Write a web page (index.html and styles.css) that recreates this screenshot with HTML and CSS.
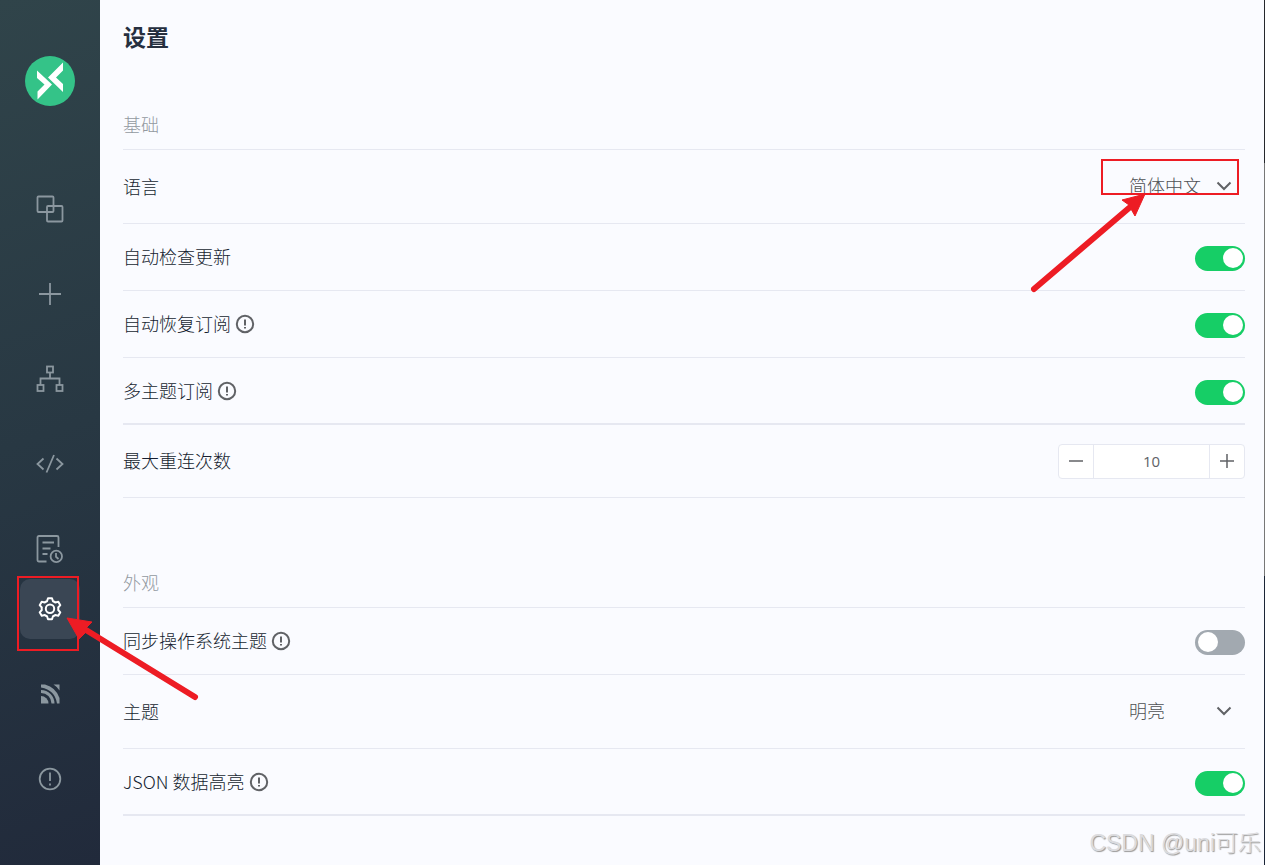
FILE: index.html
```html
<!DOCTYPE html>
<html lang="zh-CN">
<head>
  <meta charset="UTF-8" />
  <meta name="viewport" content="width=device-width, initial-scale=1.0" />
  <title>设置</title>
  <link rel="stylesheet" href="styles.css">
</head>
<body>
  <div class="app">
    <!-- Sidebar -->
    <nav class="sidebar">
      <a class="logo" href="#" aria-label="MQTTX">
        <svg width="50" height="50" viewBox="0 0 50 50">
          <circle cx="25" cy="25" r="25" fill="#34c388" />
          <path d="M12 14.5 L27 28.5 L12.5 43.5 V35.5 L19.5 28.5 L12 22 Z" fill="#fff" />
          <path d="M38 6.5 V14.5 L31 21.5 L38 28 V36 L23 21.5 Z" fill="#fff" />
        </svg>
      </a>
      <div class="menu">
        <a class="item" href="#" aria-label="连接">
          <svg width="30" height="30" viewBox="0 0 30 30">
            <rect x="2.5" y="2.5" width="16" height="15.5" rx="1" />
            <rect x="12" y="12" width="15.5" height="15.5" rx="1" />
          </svg>
        </a>
        <a class="item" href="#" aria-label="新建">
          <svg width="30" height="30" viewBox="0 0 30 30">
            <path d="M15 4 V26 M4 15 H26" />
          </svg>
        </a>
        <a class="item" href="#" aria-label="拓扑">
          <svg width="30" height="30" viewBox="0 0 30 30">
            <rect x="12" y="2.5" width="6" height="6" />
            <rect x="2.5" y="21" width="6" height="6" />
            <rect x="21.5" y="21" width="6" height="6" />
            <path d="M15 8.5 V14.5 M5.5 21 V14.5 H24.5 V21" />
          </svg>
        </a>
        <a class="item" href="#" aria-label="脚本">
          <svg width="30" height="30" viewBox="0 0 30 30">
            <path d="M8.5 9.5 L2.5 15 L8.5 20.5 M21.5 9.5 L27.5 15 L21.5 20.5 M19 6 L11.5 23.5" />
          </svg>
        </a>
        <a class="item" href="#" aria-label="日志">
          <svg width="30" height="30" viewBox="0 0 30 30">
            <path d="M11.5 27.5 H4 Q2.5 27.5 2.5 26 V3.5 Q2.5 2 4 2 H22 Q23.5 2 23.5 3.5 V13" />
            <path d="M7.5 8.5 H19 M7.5 14.5 H15.5 M7.5 20 H12.5" />
            <circle cx="21.3" cy="22.4" r="5.7" />
            <path d="M21 19 V22.8 L23.5 25" />
          </svg>
        </a>
      </div>
      <div class="menu">
        <a class="item active" href="#" aria-label="设置">
          <svg width="30" height="30" viewBox="0 0 30 30">
            <path d="M13 4.2 H17 L18 7.2 Q19.2 7.6 20.2 8.4 L23.3 7.7 L25.3 11.2 L23.2 13.5 Q23.5 14.7 23.2 16 L25.3 18.3 L23.3 21.8 L20.2 21.1 Q19.2 21.9 18 22.3 L17 25.3 H13 L12 22.3 Q10.8 21.9 9.8 21.1 L6.7 21.8 L4.7 18.3 L6.8 16 Q6.5 14.7 6.8 13.5 L4.7 11.2 L6.7 7.7 L9.8 8.4 Q10.8 7.6 12 7.2 Z" />
            <circle cx="15" cy="14.7" r="4.2" />
          </svg>
        </a>
        <a class="item" href="#" aria-label="博客">
          <svg class="solid" width="30" height="30" viewBox="0 0 30 30">
            <path d="M6 17 A7.5 7.5 0 0 1 13.5 24.5 H6 Z" />
            <path d="M6 11 A13.5 13.5 0 0 1 19.5 24.5 H16.5 A10.5 10.5 0 0 0 6 14 Z" />
            <path d="M6 5.5 H10 Q21 8.5 24.5 19 V24.5 H22 Q20 11 6 8.5 Z" />
            <path d="M18.5 5.5 H24.5 V11.5 Q22.5 8 18.5 5.5 Z" />
          </svg>
        </a>
        <a class="item" href="#" aria-label="关于">
          <svg width="30" height="30" viewBox="0 0 30 30">
            <circle cx="15" cy="15" r="10.3" />
            <path d="M15 8.5 V17 M15 19.5 V21.5" />
          </svg>
        </a>
      </div>
      <svg class="mark mark-menu" width="190" height="130" viewBox="0 0 190 130">
        <rect x="2" y="2" width="60" height="73" />
        <path class="shaft" d="M179 122 L70 55" />
        <path class="head" d="M51 43 L76 47 L70 53 L71 56 L63 64 Z" />
      </svg>
    </nav>

    <!-- Settings -->
    <main class="settings">
      <h1 class="title">设置</h1>

      <section class="group">
        <h2 class="group-title">基础</h2>
        <div class="row tall">
          <label for="language">语言</label>
          <div class="select">
            <select id="language">
              <option>简体中文</option>
              <option>English</option>
            </select>
            <svg width="16" height="10" viewBox="0 0 16 10"><path d="M1.5 1.5 L8 8 L14.5 1.5" /></svg>
          </div>
          <svg class="mark mark-language" width="212" height="140" viewBox="0 0 212 140">
            <rect x="69" y="7" width="136" height="34" />
            <path class="shaft" d="M1 136 L96 55" />
            <path class="head" d="M112 41 L89 47 L96 52 L98 56 L102 63 Z" />
          </svg>
        </div>
        <div class="row">
          <label for="update">自动检查更新</label>
          <input class="switch" type="checkbox" id="update" checked>
        </div>
        <div class="row">
          <label for="resubscribe">自动恢复订阅</label>
          <svg class="tip" width="20" height="20" viewBox="0 0 20 20"><circle cx="10" cy="10" r="8.2" /><path d="M10 5.5 V11.5 M10 13 V14.5" /></svg>
          <input class="switch" type="checkbox" id="resubscribe" checked>
        </div>
        <div class="row thick">
          <label for="multi">多主题订阅</label>
          <svg class="tip" width="20" height="20" viewBox="0 0 20 20"><circle cx="10" cy="10" r="8.2" /><path d="M10 5.5 V11.5 M10 13 V14.5" /></svg>
          <input class="switch" type="checkbox" id="multi" checked>
        </div>
        <div class="row medium">
          <label for="reconnect">最大重连次数</label>
          <div class="number">
            <button type="button" aria-label="减少"><svg width="16" height="16" viewBox="0 0 16 16"><path d="M1 8 H15" /></svg></button>
            <input type="text" id="reconnect" value="10">
            <button type="button" aria-label="增加"><svg width="16" height="16" viewBox="0 0 16 16"><path d="M1 8 H15 M8 1 V15" /></svg></button>
          </div>
        </div>
      </section>

      <section class="group">
        <h2 class="group-title">外观</h2>
        <div class="row">
          <label for="system">同步操作系统主题</label>
          <svg class="tip" width="20" height="20" viewBox="0 0 20 20"><circle cx="10" cy="10" r="8.2" /><path d="M10 5.5 V11.5 M10 13 V14.5" /></svg>
          <input class="switch" type="checkbox" id="system">
        </div>
        <div class="row tall">
          <label for="theme">主题</label>
          <div class="select">
            <select id="theme">
              <option>明亮</option>
              <option>暗黑</option>
            </select>
            <svg width="16" height="10" viewBox="0 0 16 10"><path d="M1.5 1.5 L8 8 L14.5 1.5" /></svg>
          </div>
        </div>
        <div class="row thick">
          <label for="json">JSON 数据高亮</label>
          <svg class="tip" width="20" height="20" viewBox="0 0 20 20"><circle cx="10" cy="10" r="8.2" /><path d="M10 5.5 V11.5 M10 13 V14.5" /></svg>
          <input class="switch" type="checkbox" id="json" checked>
        </div>
      </section>
    </main>
    <div class="edge"></div>
    <div class="watermark">CSDN @uni可乐</div>
  </div>
</body>
</html>
```
FILE: styles.css
```css
* {
  box-sizing: border-box;
}

body {
  margin: 0;
  font-family: "Noto Sans CJK SC", sans-serif;
  font-size: 18px;
  font-weight: 300;
  color: #161e30;
  background: #fafbff;
}

.app {
  position: relative;
  display: flex;
  min-height: 100vh;
}

/* Sidebar */
.sidebar {
  position: relative;
  flex: none;
  width: 100px;
  padding-top: 56px;
  display: flex;
  flex-direction: column;
  align-items: center;
  background: linear-gradient(160deg, #30444a 0%, #283843 50%, #212a3b 100%);
}

.logo {
  height: 50px;
  margin-bottom: 73px;
}

.menu {
  display: flex;
  flex-direction: column;
  gap: 25px;
}

.item {
  width: 60px;
  height: 60px;
  border-radius: 10px;
  display: flex;
  align-items: center;
  justify-content: center;
  color: #8b979f;
}

.item svg {
  fill: none;
  stroke: currentColor;
  stroke-width: 1.8;
}

.item .solid {
  fill: currentColor;
  stroke: none;
}

.item.active {
  color: #fff;
  background: #3a4654;
}

.item.active svg {
  stroke-width: 2;
  stroke-linejoin: round;
}

/* Red annotations */
.mark {
  position: absolute;
  z-index: 2;
  fill: none;
  stroke: #ed1c24;
  stroke-width: 2;
  pointer-events: none;
  overflow: visible;
}

.mark .shaft {
  stroke-width: 6;
  stroke-linecap: round;
}

.mark .head {
  fill: #ed1c24;
  stroke-width: 1;
}

.mark-menu {
  left: 16px;
  top: 575px;
}

.mark-language {
  right: 0;
  top: 3px;
}

/* Settings */
.settings {
  flex: 1;
  padding: 19px 19px 0 23px;
}

.title {
  margin: 0 0 61px;
  font-size: 23px;
  line-height: 34px;
  font-weight: 700;
  color: #262f3f;
}

.group + .group {
  margin-top: 74px;
}

.group-title {
  margin: 0;
  height: 36px;
  font-size: 18px;
  line-height: 20px;
  font-weight: 300;
  color: #92999f;
  border-bottom: 1px solid #e6e8f1;
}

.row {
  position: relative;
  display: flex;
  align-items: center;
  height: 67px;
  border-bottom: 1px solid #e6e8f1;
}

.row.medium {
  height: 73px;
}

.row.tall {
  height: 74px;
}

.row.thick {
  padding-top: 1px;
  border-bottom-width: 2px;
}

.row label {
  padding-bottom: 2px;
}

.tip {
  margin: 0 0 1px 4px;
  fill: none;
  stroke: #606266;
  stroke-width: 2;
}

.switch {
  appearance: none;
  position: relative;
  width: 50px;
  height: 25px;
  margin: 2px 0 0 auto;
  border-radius: 13px;
  background: #a2a9b0;
  cursor: pointer;
}

.switch::before {
  content: "";
  position: absolute;
  left: 3px;
  top: 2px;
  width: 20px;
  height: 20px;
  border-radius: 50%;
  background: #fff;
}

.switch:checked {
  background: #16ce66;
}

.switch:checked::before {
  left: 28px;
}

.select {
  display: grid;
  align-items: center;
  width: 132px;
  margin-left: auto;
  padding-bottom: 2px;
}

.select select {
  grid-area: 1 / 1;
  appearance: none;
  height: 35px;
  padding: 0 0 2px 16px;
  border: none;
  background: transparent;
  font: inherit;
  color: #4e5054;
}

.select svg {
  grid-area: 1 / 1;
  justify-self: end;
  margin-right: 13px;
  fill: none;
  stroke: #606266;
  stroke-width: 2;
  pointer-events: none;
}

.number {
  display: flex;
  width: 187px;
  height: 35px;
  margin-left: auto;
  border: 1px solid #e6e8f1;
  border-radius: 4px;
  background: #fff;
}

.number button {
  flex: none;
  width: 34px;
  padding: 0;
  border: none;
  background: none;
  display: flex;
  align-items: center;
  justify-content: center;
}

.number svg {
  fill: none;
  stroke: #606266;
  stroke-width: 1.5;
}

.number input {
  flex: 1;
  min-width: 0;
  padding: 0;
  border: solid #e6e8f1;
  border-width: 0 1px;
  background: none;
  font-family: "Open Sans", sans-serif;
  font-size: 15px;
  text-align: center;
  color: #606266;
}

/* Window behind, seen along the right side */
.edge {
  flex: none;
  width: 1px;
  background: linear-gradient(#25272c 163px, #777 163px, #777 576px, #1b2536 576px);
}

.watermark {
  position: absolute;
  right: 4px;
  bottom: 5px;
  font-family: "Liberation Sans", "Noto Sans CJK SC", sans-serif;
  font-size: 23px;
  line-height: 34px;
  font-weight: 300;
  color: #dcdcdf;
  text-shadow: 1px 1px 1px #999;
}
```
